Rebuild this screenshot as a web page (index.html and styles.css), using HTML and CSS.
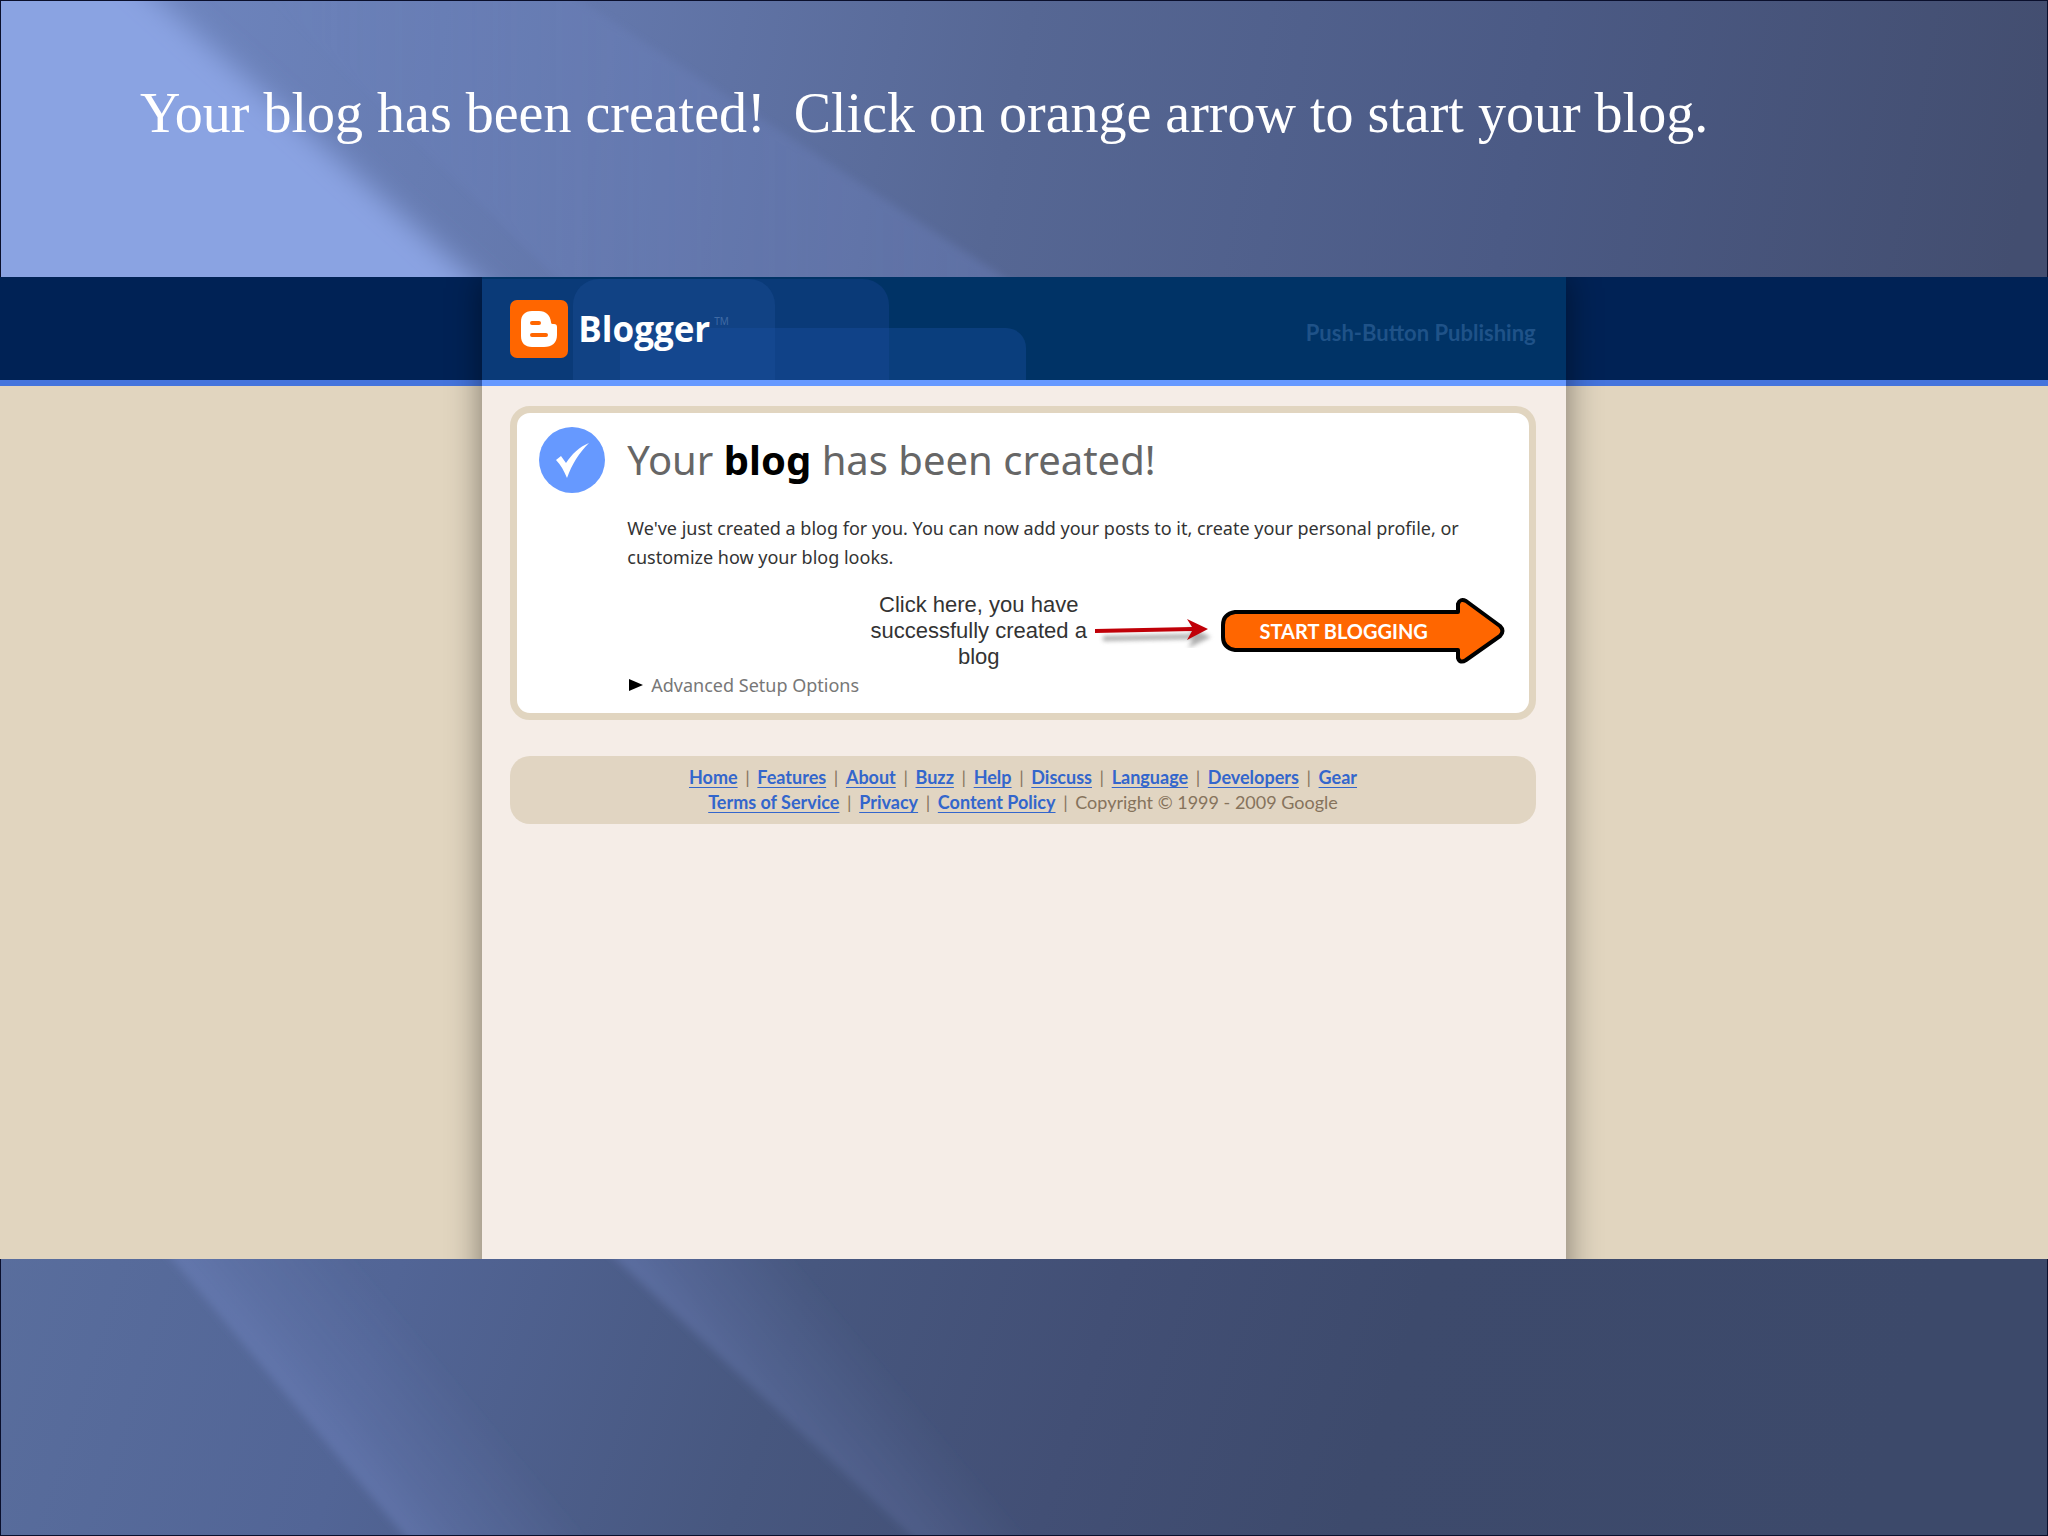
FILE: index.html
```html
<!DOCTYPE html>
<html lang="en">
<head>
    <meta charset="UTF-8">
    <meta name="viewport" content="width=device-width, initial-scale=1.0">
    <title>Your blog has been created!</title>
    <link rel="stylesheet" href="styles.css">
</head>
<body>
    <svg class="backdrop" viewBox="0 0 2048 1536" preserveAspectRatio="none" aria-hidden="true">
        <defs>
            <linearGradient id="top" x1="0" y1="0" x2="1" y2="0.08">
                <stop offset="0" stop-color="#7189c4"/>
                <stop offset="0.3" stop-color="#6377ab"/>
                <stop offset="0.5" stop-color="#566794"/>
                <stop offset="0.75" stop-color="#4b5a85"/>
                <stop offset="1" stop-color="#434e70"/>
            </linearGradient>
            <linearGradient id="bottom" x1="0" y1="0" x2="1" y2="0.1">
                <stop offset="0" stop-color="#5b709f"/>
                <stop offset="0.25" stop-color="#526596"/>
                <stop offset="0.45" stop-color="#47577f"/>
                <stop offset="0.6" stop-color="#424f75"/>
                <stop offset="0.75" stop-color="#3d4a6c"/>
                <stop offset="1" stop-color="#3c496a"/>
            </linearGradient>
            <linearGradient id="beam" x1="0" y1="0" x2="1" y2="0">
                <stop offset="0" stop-color="#7f96e0" stop-opacity="0"/>
                <stop offset="0.5" stop-color="#7f96e0" stop-opacity="0.25"/>
                <stop offset="1" stop-color="#7f96e0" stop-opacity="0.4"/>
            </linearGradient>
            <linearGradient id="ray" gradientUnits="userSpaceOnUse" x1="0" y1="0" x2="110" y2="-92">
                <stop offset="0" stop-color="#7c90d0" stop-opacity="0.35"/>
                <stop offset="0.3" stop-color="#7c90d0" stop-opacity="0.2"/>
                <stop offset="1" stop-color="#7c90d0" stop-opacity="0"/>
            </linearGradient>
            <filter id="soft" x="-20%" y="-20%" width="140%" height="140%">
                <feGaussianBlur stdDeviation="14"/>
            </filter>
            <filter id="edge">
                <feGaussianBlur stdDeviation="4"/>
            </filter>
        </defs>
        <rect width="2048" height="900" fill="url(#top)"/>
        <rect y="900" width="2048" height="636" fill="url(#bottom)"/>
        <path d="M-60-60H90L520 320H-60z" fill="#8aa3e2" filter="url(#soft)"/>
        <path d="M250-20H550L1070 320H600z" fill="url(#beam)" filter="url(#edge)" opacity="0.6"/>
        <g transform="translate(155 1240)">
            <path d="M0 0H220L480 310H260z" fill="url(#ray)" filter="url(#edge)"/>
        </g>
        <g transform="translate(595 1240)">
            <path d="M0 0H220L550 310H330z" fill="url(#ray)" filter="url(#edge)"/>
        </g>
    </svg>

    <div class="slide">
        <h1 class="slide-title">Your blog has been created!&nbsp; Click on orange arrow to start your blog.</h1>

        <div class="screen">
            <div class="page">
                <header class="header">
                    <svg class="header-shapes" width="560" height="103" viewBox="0 0 560 103" aria-hidden="true">
                        <path d="M0 2H381a26 26 0 0 1 26 26V103H0z" fill="#0a3a78"/>
                        <path d="M91 103V28a26 26 0 0 1 26-26H267a26 26 0 0 1 26 26V103z" fill="#114284"/>
                        <path d="M138 103V51H524a20 20 0 0 1 20 20V103z" fill="#1a4fa0" opacity="0.4"/>
                    </svg>
                    <a class="logo" href="#">
                        <svg width="58" height="58" viewBox="0 0 58 58" aria-hidden="true">
                            <rect width="58" height="58" rx="7" fill="#ff6600"/>
                            <path d="M22 11H29C36 11 40 15 41 22C41 24 42 24 44 24C46 24 47 25 47 27V35C47 43 42 47 34 47H22C15 47 11 43 11 36V22C11 15 15 11 22 11z" fill="#fff"/>
                            <path d="M22 23H29M22 35H36" stroke="#ff6600" stroke-width="4" stroke-linecap="round"/>
                        </svg>
                        <span class="logo-name">Blogger</span><span class="logo-tm">TM</span>
                    </a>
                    <p class="tagline">Push-Button Publishing</p>
                </header>

                <main class="panel">
                    <svg class="check" width="66" height="66" viewBox="0 0 66 66" aria-hidden="true">
                        <circle cx="33" cy="33" r="33" fill="#6699ff"/>
                        <path d="M17 33L22 29L27 36C33 27 40 20 50 16C40 26 33 37 28 51C25 44 22 38 17 33z" fill="#fff"/>
                    </svg>
                    <div class="panel-body">
                        <h2>Your <strong>blog</strong> has been created!</h2>
                        <p class="intro">We've just created a blog for you. You can now add your posts to it, create your personal profile, or customize how your blog looks.</p>
                        <div class="action">
                            <p class="note">Click here, you have successfully created a blog</p>
                            <svg class="pointer" width="122" height="34" viewBox="0 0 122 34" aria-hidden="true">
                                <filter id="blur"><feGaussianBlur stdDeviation="2"/></filter>
                                <path d="M8 22L98 20L92 12L116 23L93 34L98 25L8 27z" fill="#777" opacity="0.6" filter="url(#blur)"/>
                                <path d="M0 15L97 13L92 5L113 15L92 26L97 17L0 19z" fill="#c00008"/>
                            </svg>
                            <button class="start" type="button">
                                <svg class="start-shape" viewBox="0 0 284 66" aria-hidden="true">
                                    <path d="M14 14H237V6Q239 0 245 3L279 28Q284 33 279 38L245 62Q239 66 237 60V52H14Q2 50 2 39V27Q2 16 14 14z" fill="#ff6600" stroke="#000" stroke-width="4" stroke-linejoin="round"/>
                                </svg>
                                <span>START BLOGGING</span>
                            </button>
                        </div>
                        <a class="advanced" href="#">
                            <svg width="14" height="12" viewBox="0 0 14 12" aria-hidden="true"><path d="M0 0L14 6L0 12z"/></svg>
                            Advanced Setup Options
                        </a>
                    </div>
                </main>

                <footer class="footer">
                    <div>
                        <a href="#">Home</a> | <a href="#">Features</a> | <a href="#">About</a> | <a href="#">Buzz</a> | <a href="#">Help</a> | <a href="#">Discuss</a> | <a href="#">Language</a> | <a href="#">Developers</a> | <a href="#">Gear</a>
                    </div>
                    <div>
                        <a href="#">Terms of Service</a> | <a href="#">Privacy</a> | <a href="#">Content Policy</a> | <span>Copyright © 1999 - 2009 Google</span>
                    </div>
                </footer>
            </div>
        </div>
    </div>
</body>
</html>
```
FILE: styles.css
```css
* {
    box-sizing: border-box;
}
body {
    margin: 0;
    font-family: "Trebuchet MS", "Noto Sans", sans-serif;
    color: #333;
}
h1, h2, p {
    margin: 0;
    font-weight: normal;
}
.backdrop {
    position: absolute;
    top: 0;
    left: 0;
    width: 100%;
    height: 100%;
    z-index: -1;
    border: 1px solid #0a0f2c;
}
.slide {
    min-height: 100vh;
    display: flex;
    flex-direction: column;
    padding-bottom: 277px;
}
.slide-title {
    height: 277px;
    padding: 81px 140px 0;
    font-family: "Palatino Linotype", "Liberation Serif", serif;
    font-size: 56px;
    line-height: 64px;
    color: #fff;
}
.screen {
    flex: 1;
    display: flex;
    justify-content: center;
    overflow: hidden;
    background: linear-gradient(#002255 103px, #4474dc 103px, #4474dc 109px, #e1d5bf 109px);
}
.page {
    width: calc(53% - 2px);
    margin-bottom: -40px;
    background: #f5ede7;
    box-shadow: 0 0 32px rgba(0, 0, 0, 0.45);
}
.header {
    position: relative;
    height: 109px;
    padding: 0 30px 0 28px;
    display: flex;
    justify-content: space-between;
    align-items: center;
    background: #003366;
    border-bottom: 6px solid #6699ff;
}
.header-shapes {
    position: absolute;
    top: 0;
    left: 0;
}
.logo {
    position: relative;
    display: flex;
    align-items: center;
    color: #fff;
    text-decoration: none;
}
.logo-name {
    margin-left: 10px;
    font-family: "Open Sans", sans-serif;
    font-size: 35px;
    font-weight: bold;
}
.logo-tm {
    align-self: flex-start;
    margin: 14px 0 0 4px;
    font-size: 10px;
    color: #3f6aa5;
}
.tagline {
    padding-top: 8px;
    font-family: "Trebuchet MS", Lato, sans-serif;
    font-size: 22px;
    font-weight: bold;
    color: #1f5288;
}
.panel {
    margin: 20px 30px 0 28px;
    padding: 14px 24px 13px 22px;
    display: flex;
    gap: 22px;
    background: #fff;
    border: 7px solid #e1d5c0;
    border-radius: 20px;
}
.check {
    flex: none;
}
.panel-body {
    flex: 1;
}
h2 {
    font-size: 40px;
    line-height: 66px;
    color: #666;
}
h2 strong {
    color: #000;
}
.intro {
    padding-top: 21px;
    font-size: 18px;
    line-height: 29px;
}
.action {
    display: flex;
    align-items: center;
    justify-content: flex-end;
    margin-top: 20px;
}
.note {
    width: 232px;
    font-family: Arial, "Liberation Sans", sans-serif;
    font-size: 22px;
    line-height: 26px;
    text-align: center;
}
.pointer {
    margin-right: 4px;
}
.start {
    position: relative;
    width: 284px;
    height: 66px;
    padding: 0 38px 0 0;
    border: 0;
    background: none;
    font-family: "Trebuchet MS", Lato, sans-serif;
    font-size: 20px;
    font-weight: bold;
    color: #fff;
    cursor: pointer;
}
.start-shape {
    position: absolute;
    top: 0;
    left: 0;
    width: 100%;
    height: 100%;
}
.start span {
    position: relative;
}
.advanced {
    display: flex;
    align-items: center;
    gap: 8px;
    padding-left: 2px;
    font-size: 18px;
    line-height: 30px;
    color: #777;
    text-decoration: none;
}
.footer {
    margin: 36px 30px 0 28px;
    padding: 9px;
    background: #e1d5c2;
    border-radius: 20px;
    font-family: "Trebuchet MS", Lato, sans-serif;
    font-size: 18px;
    line-height: 25px;
    text-align: center;
    color: #86735c;
}
.footer a,
.footer span {
    margin: 0 3px;
}
.footer a {
    color: #3366cc;
    font-weight: bold;
    text-underline-offset: 3px;
}
```
